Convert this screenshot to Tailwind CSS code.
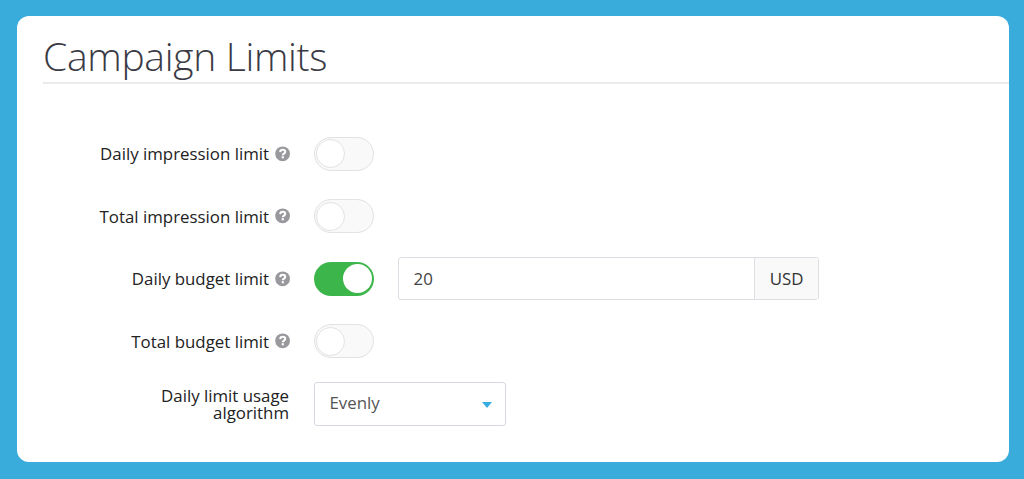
<!DOCTYPE html>
<html lang="en">
  <head>
    <meta charset="UTF-8" />
    <meta name="viewport" content="width=device-width, initial-scale=1.0" />
    <title>Campaign Limits</title>
    <!-- Tailwind CSS CDN -->
    <script src="https://cdn.jsdelivr.net/npm/@tailwindcss/browser@4"></script>
  </head>
  <body class="bg-[#39acdb] h-[479px] overflow-hidden pt-4 pl-[16.5px] pr-[15px] font-['Open_Sans',sans-serif] text-[#222]">
    <!-- Help icon, reused by the rows -->
    <svg class="hidden">
      <symbol id="help" viewBox="0 0 16 16">
        <circle cx="7.6" cy="7.8" r="7.4" fill="#98989d" />
        <path d="M5.2 6.1C5.3 4.5 6.3 3.8 7.7 3.8c1.5 0 2.5.8 2.5 2 0 1.9-2.4 1.8-2.4 3.4" fill="none" stroke="#fff" stroke-width="2.1" />
        <path d="M6.7 10.2h2.2v2.1H6.7z" fill="#fff" />
      </symbol>
    </svg>

    <main class="bg-white rounded-xl h-[445.5px] pl-[26.5px]">
      <!-- Title -->
      <h1 class="h-[68px] pt-[13px] border-b-2 border-[#ebebeb] text-[39px] leading-[54px] tracking-[-0.3px] font-light text-[#3a3a45] whitespace-nowrap">Campaign Limits</h1>

      <!-- Form rows -->
      <form class="pt-[38.4px] text-[16.85px]">
        <div class="flex items-center h-[62.6px]">
          <label class="w-[226px] text-right whitespace-nowrap">Daily impression limit</label>
          <svg class="size-4 ml-[6px] mr-[23px]"><use href="#help" /></svg>
          <div class="w-[60px] h-[34px] rounded-full border border-[#e2e2e2] bg-[#f9f9f9] flex items-center pl-px">
            <span class="size-[29px] rounded-full bg-white border border-[#e2e2e2]"></span>
          </div>
        </div>

        <div class="flex items-center h-[62.6px]">
          <label class="w-[226px] text-right whitespace-nowrap">Total impression limit</label>
          <svg class="size-4 ml-[6px] mr-[23px]"><use href="#help" /></svg>
          <div class="w-[60px] h-[34px] rounded-full border border-[#e2e2e2] bg-[#f9f9f9] flex items-center pl-px">
            <span class="size-[29px] rounded-full bg-white border border-[#e2e2e2]"></span>
          </div>
        </div>

        <div class="flex items-center h-[62.6px]">
          <label class="w-[226px] text-right whitespace-nowrap">Daily budget limit</label>
          <svg class="size-4 ml-[6px] mr-[23px]"><use href="#help" /></svg>
          <div class="w-[60px] h-[34px] rounded-full bg-[#3cb54a] flex items-center justify-end pr-[2px]">
            <span class="size-[29px] rounded-full bg-white"></span>
          </div>
          <div class="ml-6 flex w-[421px] h-[43px] rounded-[3px] border border-[#dcdee4]">
            <input type="text" value="20" class="flex-1 min-w-0 pl-[14.5px] text-[#444]" />
            <span class="w-[64px] flex items-center justify-center border-l border-[#dcdee4] bg-[#f9f9fa] text-[#333]">USD</span>
          </div>
        </div>

        <div class="flex items-center h-[62.6px]">
          <label class="w-[226px] text-right whitespace-nowrap">Total budget limit</label>
          <svg class="size-4 ml-[6px] mr-[23px]"><use href="#help" /></svg>
          <div class="w-[60px] h-[34px] rounded-full border border-[#e2e2e2] bg-[#f9f9f9] flex items-center pl-px">
            <span class="size-[29px] rounded-full bg-white border border-[#e2e2e2]"></span>
          </div>
        </div>

        <div class="flex items-center h-[62.6px]">
          <label class="w-[246px] mr-[25px] text-right leading-[17px]">Daily limit usage<br />algorithm</label>
          <div class="w-[192px] h-[44px] rounded-[3px] border border-[#d5d8e0] flex items-center justify-between pl-[14.5px] pr-[13px] text-[#555]">
            <span class="pb-[2px]">Evenly</span>
            <svg class="w-[10px] h-[6px] mt-px" viewBox="0 0 10 6"><path d="M0 0h10L5 6z" fill="#36ace2" /></svg>
          </div>
        </div>
      </form>
    </main>
  </body>
</html>
